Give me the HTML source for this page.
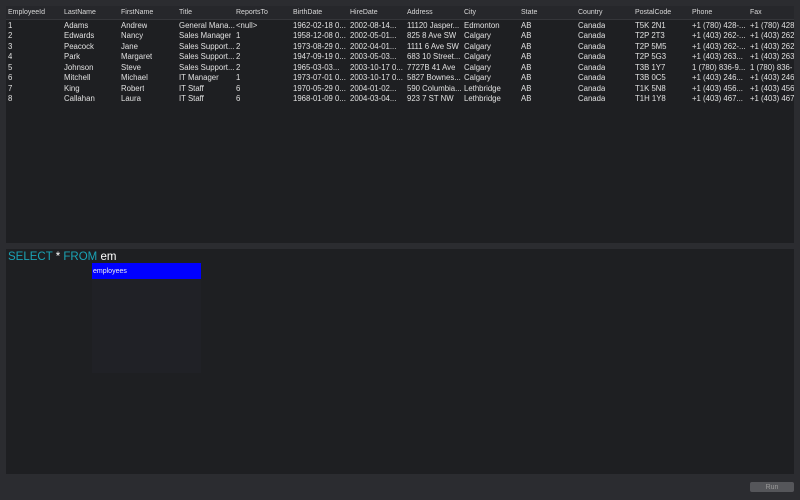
<!DOCTYPE html>
<html><head><style>
body{margin:0;width:800px;height:500px;background:#2b2c30;font-family:"Liberation Sans",sans-serif;position:relative;overflow:hidden;color:#e0e0e0}
#tbl{position:absolute;left:6px;top:6px;width:788px;height:237px;background:#1e1f22}
#hdr{position:absolute;left:0;top:0;width:788px;height:13px;background:#26272b;border-bottom:1px solid #35363a}
.c{position:absolute;font-size:7.8px;white-space:nowrap}
.h{font-size:7px;color:#d8d8d8}
#ed{position:absolute;left:6px;top:249px;width:788px;height:225px;background:#1e1f22}
#dd{position:absolute;left:92px;top:263px;width:109px;height:110px;background:#202126}
#sel{position:absolute;left:92px;top:263px;width:109px;height:16px;background:#0000ff;color:#eee;font-size:7px;line-height:17px;text-indent:1px}
#q{position:absolute;left:8px;top:251px;font-size:11.5px;color:#fff}
.k{color:#1aa3b5}
#run{position:absolute;left:750px;top:482px;width:44px;height:10px;background:#55565a;border-radius:2px;color:#9a9a9a;font-size:7px;text-align:center;line-height:11px}
</style></head><body>
<div id="tbl"><div id="hdr"></div></div>
<div id="ed"></div>
<div id="dd"></div>
<div id="sel">employees</div>
<div id="q"><span class="k">SELECT</span> * <span class="k">FROM</span> em</div>
<div id="run">Run</div>
<div id="cells"></div>
<script>
var xs=[8,64,121,179,236,293,350,407,464,521,578,635,692,750];
var H=["EmployeeId","LastName","FirstName","Title","ReportsTo","BirthDate","HireDate","Address","City","State","Country","PostalCode","Phone","Fax"];
var R=[
["1","Adams","Andrew","General Mana...","<null>","1962-02-18 0...","2002-08-14...","11120 Jasper...","Edmonton","AB","Canada","T5K 2N1","+1 (780) 428-...","+1 (780) 428"],
["2","Edwards","Nancy","Sales Manager","1","1958-12-08 0...","2002-05-01...","825 8 Ave SW","Calgary","AB","Canada","T2P 2T3","+1 (403) 262-...","+1 (403) 262"],
["3","Peacock","Jane","Sales Support...","2","1973-08-29 0...","2002-04-01...","1111 6 Ave SW","Calgary","AB","Canada","T2P 5M5","+1 (403) 262-...","+1 (403) 262"],
["4","Park","Margaret","Sales Support...","2","1947-09-19 0...","2003-05-03...","683 10 Street...","Calgary","AB","Canada","T2P 5G3","+1 (403) 263...","+1 (403) 263"],
["5","Johnson","Steve","Sales Support...","2","1965-03-03...","2003-10-17 0...","7727B 41 Ave","Calgary","AB","Canada","T3B 1Y7","1 (780) 836-9...","1 (780) 836-"],
["6","Mitchell","Michael","IT Manager","1","1973-07-01 0...","2003-10-17 0...","5827 Bownes...","Calgary","AB","Canada","T3B 0C5","+1 (403) 246...","+1 (403) 246"],
["7","King","Robert","IT Staff","6","1970-05-29 0...","2004-01-02...","590 Columbia...","Lethbridge","AB","Canada","T1K 5N8","+1 (403) 456...","+1 (403) 456"],
["8","Callahan","Laura","IT Staff","6","1968-01-09 0...","2004-03-04...","923 7 ST NW","Lethbridge","AB","Canada","T1H 1Y8","+1 (403) 467...","+1 (403) 467"]];
var o="";
function e(s){return s.replace(/</g,"&lt;").replace(/>/g,"&gt;")}
H.forEach(function(h,i){o+='<div class="c h" style="left:'+xs[i]+'px;top:9px">'+h+'</div>'});
R.forEach(function(r,j){r.forEach(function(v,i){o+='<div class="c" style="left:'+xs[i]+'px;top:'+(20.5+j*10.5)+'px;max-width:'+(i==13?44:56)+'px;overflow:hidden">'+e(v)+'</div>'})});
document.getElementById("cells").innerHTML=o;
</script>
</body></html>
